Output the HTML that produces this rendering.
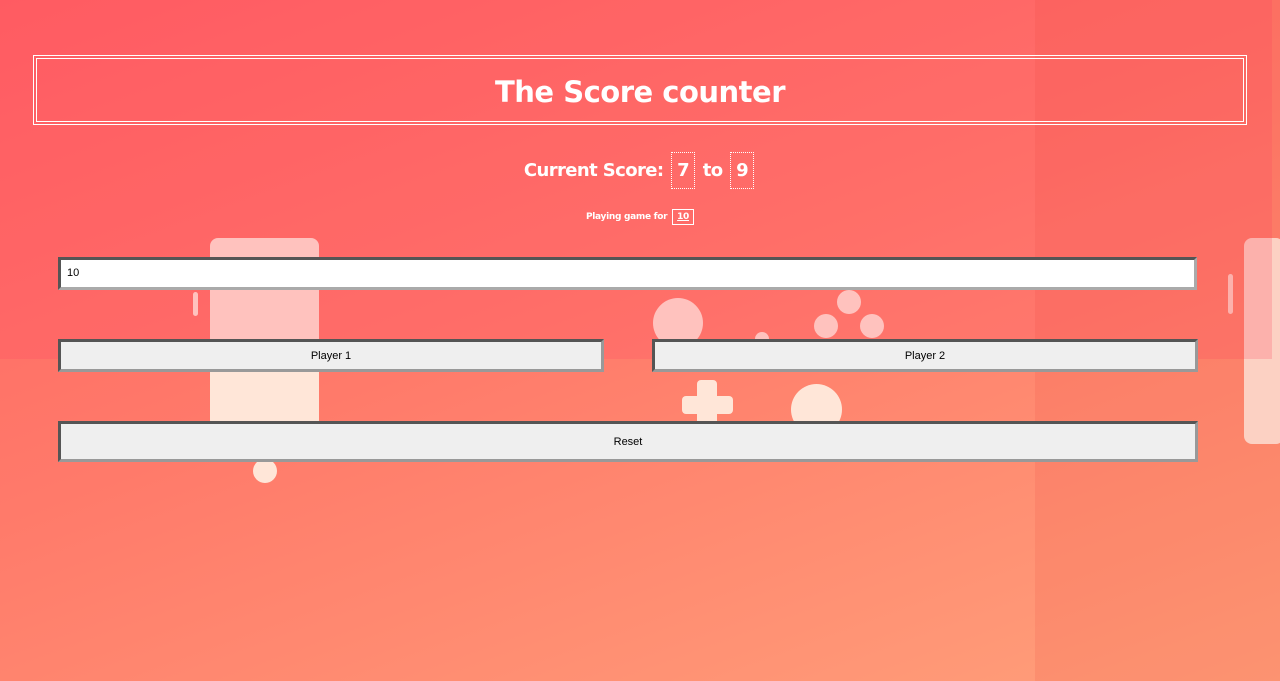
<!DOCTYPE html>
<html><head><style>
*{margin:0;padding:0;box-sizing:border-box}
body{width:1280px;height:681px;overflow:hidden;position:relative;font-family:"DejaVu Sans","Liberation Sans",sans-serif;background:linear-gradient(160deg,#ff6262 0%,#ff7a6a 45%,#ffa07a 100%);}
.s{position:absolute;background:#ffe6d8}
.c{position:absolute;background:#ffe6d8;border-radius:50%}
.band{position:absolute;left:0;top:0;width:1272px;height:359px;background:rgba(255,70,100,0.22)}
.right{position:absolute;left:1035px;top:0;width:245px;height:681px;background:rgba(230,60,50,0.12)}
.title{position:absolute;left:33px;top:55px;width:1214px;height:70px;border:4px double #fff;color:#fff;font-weight:bold;font-size:29px;letter-spacing:-0.5px;text-align:center;line-height:66px}
.score{position:absolute;left:0;width:1280px;top:152px;text-align:center;color:#fff;font-weight:bold;font-size:18px;letter-spacing:-0.6px}
.box{display:inline-block;border:1px dotted #fff;padding:7px 5px;margin:0 2px}
.play{position:absolute;left:0;width:1280px;top:212px;text-align:center;color:#fff;font-weight:bold;font-size:9px;letter-spacing:-0.3px}
.play span{border:1px solid #fff;padding:2px 4px;text-decoration:underline;margin-left:2px}
.inp{position:absolute;left:58px;top:257px;width:1139px;height:33px;background:#fff;border:3px solid #555;border-right-color:#aaa;border-bottom-color:#aaa;font-size:11px;padding:7px 6px;font-family:"Liberation Sans",sans-serif}
.btn{position:absolute;background:#efefef;border:3px solid #555;border-right-color:#999;border-bottom-color:#999;font-size:11px;text-align:center;font-family:"Liberation Sans",sans-serif;color:#000}
</style></head><body>
<div class="s" style="left:210px;top:238px;width:109px;height:190px;border-radius:8px"></div>
<div class="c" style="left:253px;top:459px;width:24px;height:24px"></div>
<div class="s" style="left:193px;top:292px;width:5px;height:24px;border-radius:3px"></div>
<div class="c" style="left:653px;top:298px;width:50px;height:50px"></div>
<div class="c" style="left:791px;top:384px;width:51px;height:51px"></div>
<div class="c" style="left:837px;top:290px;width:24px;height:24px"></div>
<div class="c" style="left:814px;top:314px;width:24px;height:24px"></div>
<div class="c" style="left:860px;top:314px;width:24px;height:24px"></div>
<div class="c" style="left:755px;top:332px;width:14px;height:14px"></div>
<div class="s" style="left:697px;top:380px;width:20px;height:45px;border-radius:4px"></div>
<div class="s" style="left:682px;top:396px;width:51px;height:18px;border-radius:4px"></div>
<div class="s" style="left:1244px;top:238px;width:40px;height:206px;border-radius:8px"></div>
<div class="s" style="left:1228px;top:274px;width:5px;height:40px;border-radius:3px"></div>
<div class="band"></div>
<div class="right"></div>
<div class="title">The Score counter</div>
<div class="score">Current Score: <span class="box">7</span> to <span class="box">9</span></div>
<div class="play">Playing game for <span>10</span></div>
<div class="inp">10</div>
<div class="btn" style="left:58px;top:339px;width:546px;height:33px;line-height:29px">Player 1</div>
<div class="btn" style="left:652px;top:339px;width:546px;height:33px;line-height:29px">Player 2</div>
<div class="btn" style="left:58px;top:421px;width:1140px;height:41px;line-height:37px">Reset</div>
</body></html>
